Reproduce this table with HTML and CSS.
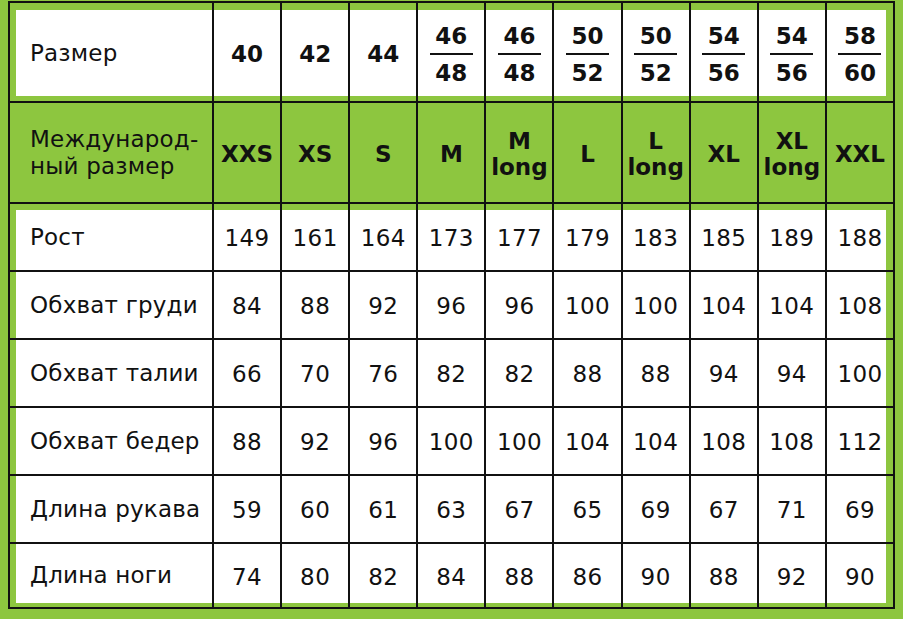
FILE: index.html
```html
<!DOCTYPE html>
<html lang="ru">
<head>
<meta charset="utf-8">
<title>Таблица размеров</title>
<link rel="stylesheet" href="styles.css">
</head>
<body>
<div class="frame">
  <!-- header row -->
  <div class="cell label r-head c-first">Размер</div>
  <div class="cell bold r-head">40</div>
  <div class="cell bold r-head">42</div>
  <div class="cell bold r-head">44</div>
  <div class="cell bold r-head"><span class="frac"><span>46</span><i class="bar"></i><span>48</span></span></div>
  <div class="cell bold r-head"><span class="frac"><span>46</span><i class="bar"></i><span>48</span></span></div>
  <div class="cell bold r-head"><span class="frac"><span>50</span><i class="bar"></i><span>52</span></span></div>
  <div class="cell bold r-head"><span class="frac"><span>50</span><i class="bar"></i><span>52</span></span></div>
  <div class="cell bold r-head"><span class="frac"><span>54</span><i class="bar"></i><span>56</span></span></div>
  <div class="cell bold r-head"><span class="frac"><span>54</span><i class="bar"></i><span>56</span></span></div>
  <div class="cell bold r-head c-last"><span class="frac"><span>58</span><i class="bar"></i><span>60</span></span></div>

  <!-- international size row -->
  <div class="cell label green two">Международ-<br>ный размер</div>
  <div class="cell bold green">XXS</div>
  <div class="cell bold green">XS</div>
  <div class="cell bold green">S</div>
  <div class="cell bold green">M</div>
  <div class="cell bold green two">M<br>long</div>
  <div class="cell bold green">L</div>
  <div class="cell bold green two">L<br>long</div>
  <div class="cell bold green">XL</div>
  <div class="cell bold green two">XL<br>long</div>
  <div class="cell bold green">XXL</div>

  <div class="cell label r-top c-first">Рост</div>
  <div class="cell num r-top">149</div>
  <div class="cell num r-top">161</div>
  <div class="cell num r-top">164</div>
  <div class="cell num r-top">173</div>
  <div class="cell num r-top">177</div>
  <div class="cell num r-top">179</div>
  <div class="cell num r-top">183</div>
  <div class="cell num r-top">185</div>
  <div class="cell num r-top">189</div>
  <div class="cell num r-top c-last">188</div>

  <div class="cell label c-first">Обхват груди</div>
  <div class="cell num">84</div>
  <div class="cell num">88</div>
  <div class="cell num">92</div>
  <div class="cell num">96</div>
  <div class="cell num">96</div>
  <div class="cell num">100</div>
  <div class="cell num">100</div>
  <div class="cell num">104</div>
  <div class="cell num">104</div>
  <div class="cell num c-last">108</div>

  <div class="cell label c-first">Обхват талии</div>
  <div class="cell num">66</div>
  <div class="cell num">70</div>
  <div class="cell num">76</div>
  <div class="cell num">82</div>
  <div class="cell num">82</div>
  <div class="cell num">88</div>
  <div class="cell num">88</div>
  <div class="cell num">94</div>
  <div class="cell num">94</div>
  <div class="cell num c-last">100</div>

  <div class="cell label c-first">Обхват бедер</div>
  <div class="cell num">88</div>
  <div class="cell num">92</div>
  <div class="cell num">96</div>
  <div class="cell num">100</div>
  <div class="cell num">100</div>
  <div class="cell num">104</div>
  <div class="cell num">104</div>
  <div class="cell num">108</div>
  <div class="cell num">108</div>
  <div class="cell num c-last">112</div>

  <div class="cell label c-first">Длина рукава</div>
  <div class="cell num">59</div>
  <div class="cell num">60</div>
  <div class="cell num">61</div>
  <div class="cell num">63</div>
  <div class="cell num">67</div>
  <div class="cell num">65</div>
  <div class="cell num">69</div>
  <div class="cell num">67</div>
  <div class="cell num">71</div>
  <div class="cell num c-last">69</div>

  <div class="cell label r-bottom c-first">Длина ноги</div>
  <div class="cell num r-bottom">74</div>
  <div class="cell num r-bottom">80</div>
  <div class="cell num r-bottom">82</div>
  <div class="cell num r-bottom">84</div>
  <div class="cell num r-bottom">88</div>
  <div class="cell num r-bottom">86</div>
  <div class="cell num r-bottom">90</div>
  <div class="cell num r-bottom">88</div>
  <div class="cell num r-bottom">92</div>
  <div class="cell num r-bottom c-last">90</div>
</div>
</body>
</html>
```

FILE: styles.css
```css
:root {
  --green: #8dc63f;
  --ink: #111111;
}

html, body {
  margin: 0;
  padding: 0;
}

body {
  background: var(--green);
  width: 903px;
  height: 619px;
  overflow: hidden;
  font-family: "DejaVu Sans", Verdana, sans-serif;
  color: var(--ink);
}

.frame {
  margin: 1px 8px 0 8px;
  border: 2px solid var(--ink);
  background: var(--ink);
  display: grid;
  grid-template-columns: 202px repeat(10, 1fr);
  grid-template-rows: 98px 99px repeat(5, 66px) 63px;
  gap: 2px;
}

.cell {
  --sl: 0px;
  --sr: 0px;
  --st: 0px;
  --sb: 0px;
  background: #ffffff;
  box-shadow:
    inset var(--sl) 0 0 var(--green),
    inset calc(-1 * var(--sr)) 0 0 var(--green),
    inset 0 var(--st) 0 var(--green),
    inset 0 calc(-1 * var(--sb)) 0 var(--green);
  display: flex;
  align-items: center;
  justify-content: center;
  text-align: center;
}

.r-head { --st: 7px; --sb: 5px; }
.r-top { --st: 6px; }
.r-bottom { --sb: 4px; }
.c-first { --sl: 6px; }
.c-last { --sr: 7px; }

.green {
  background: var(--green);
}

.label {
  justify-content: flex-start;
  text-align: left;
  padding-left: 20px;
  font-size: 23px;
  line-height: 27px;
  letter-spacing: 0.2px;
}

.r-head.label { padding-top: 2px; }

.num {
  font-size: 23px;
  letter-spacing: 0.4px;
  padding-top: 2px;
}

.bold {
  font-weight: bold;
  font-size: 23px;
  line-height: 26px;
}

.r-head.bold { padding-top: 4px; }

.green.bold { padding-top: 2px; }

.frac {
  display: flex;
  flex-direction: column;
  align-items: center;
  line-height: 26px;
}

.bar {
  display: block;
  width: 43px;
  height: 2px;
  background: var(--ink);
  margin: 4px 0 5px;
}
```
